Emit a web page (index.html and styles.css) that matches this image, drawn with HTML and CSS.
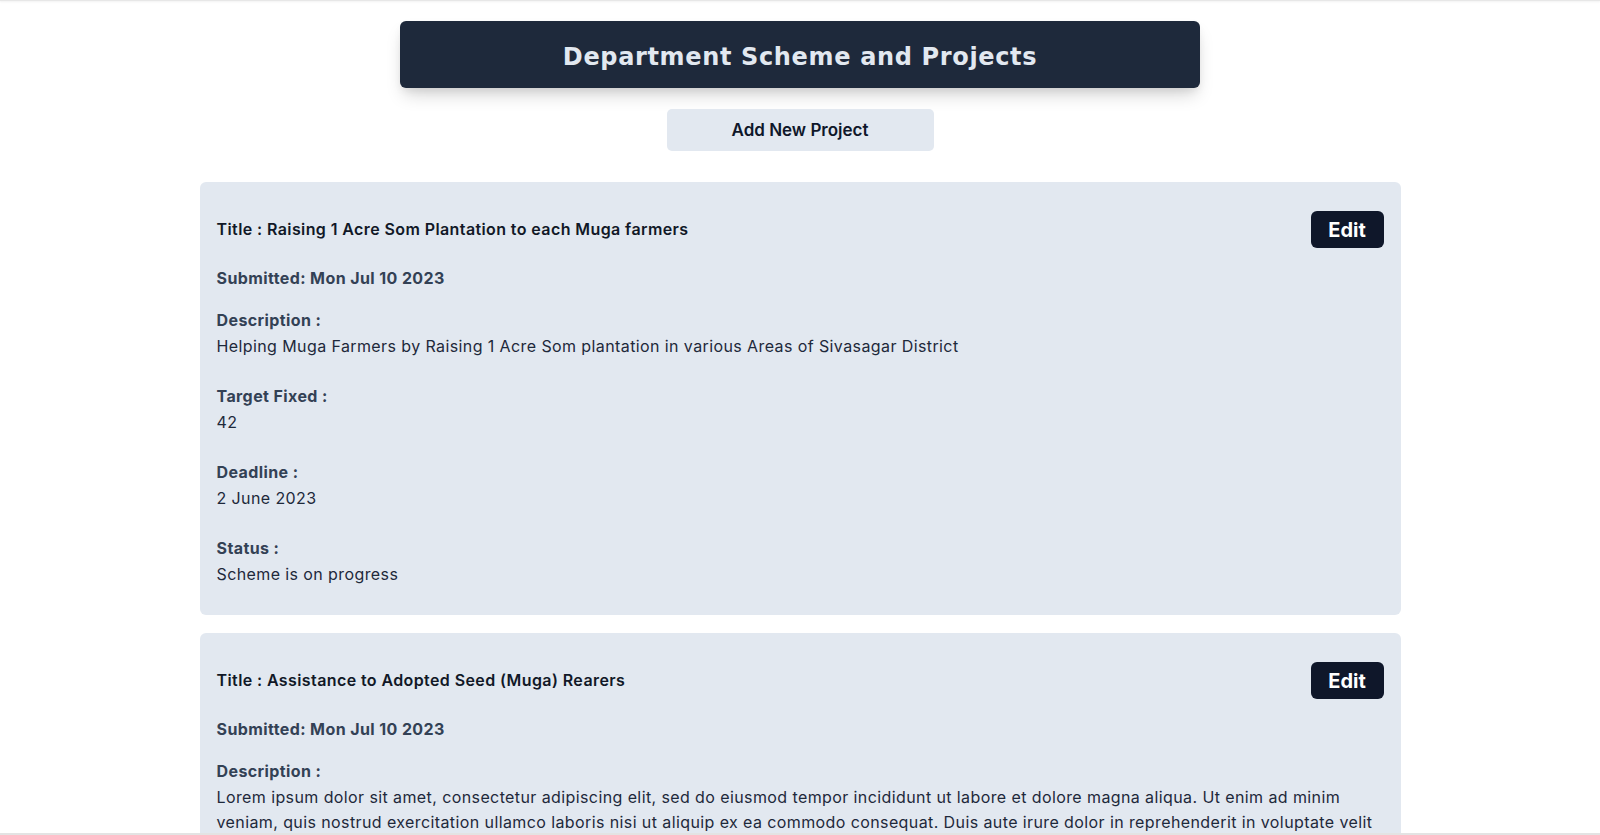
FILE: index.html
```html
<!DOCTYPE html>
<html lang="en">
<head>
<meta charset="utf-8">
<title>Department Scheme and Projects</title>
<link rel="stylesheet" href="styles.css">
</head>
<body>
<div class="topline"></div>
<main class="page">
  <header class="banner">
    <h1 class="banner-title">Department Scheme and Projects</h1>
  </header>
  <button class="add-btn" type="button">Add New Project</button>

  <section class="list">
    <article class="card">
      <div class="card-head">
        <h2 class="card-title">Title : Raising 1 Acre Som Plantation to each Muga farmers</h2>
        <button class="edit-btn" type="button">Edit</button>
      </div>
      <p class="submitted">Submitted: Mon Jul 10 2023</p>
      <div class="field">
        <div class="label">Description :</div>
        <div class="value">Helping Muga Farmers by Raising 1 Acre Som plantation in various Areas of Sivasagar District</div>
      </div>
      <div class="field">
        <div class="label">Target Fixed :</div>
        <div class="value">42</div>
      </div>
      <div class="field">
        <div class="label">Deadline :</div>
        <div class="value">2 June 2023</div>
      </div>
      <div class="field">
        <div class="label">Status :</div>
        <div class="value">Scheme is on progress</div>
      </div>
    </article>

    <article class="card">
      <div class="card-head">
        <h2 class="card-title">Title : Assistance to Adopted Seed (Muga) Rearers</h2>
        <button class="edit-btn" type="button">Edit</button>
      </div>
      <p class="submitted">Submitted: Mon Jul 10 2023</p>
      <div class="field">
        <div class="label">Description :</div>
        <div class="value">Lorem ipsum dolor sit amet, consectetur adipiscing elit, sed do eiusmod tempor incididunt ut labore et dolore magna aliqua. Ut enim ad minim veniam, quis nostrud exercitation ullamco laboris nisi ut aliquip ex ea commodo consequat. Duis aute irure dolor in reprehenderit in voluptate velit esse cillum dolore eu fugiat nulla pariatur. Excepteur sint occaecat cupidatat non proident, sunt in culpa qui officia deserunt mollit anim id est laborum.</div>
      </div>
      <div class="field">
        <div class="label">Target Fixed :</div>
        <div class="value">30</div>
      </div>
      <div class="field">
        <div class="label">Deadline :</div>
        <div class="value">2 June 2023</div>
      </div>
      <div class="field">
        <div class="label">Status :</div>
        <div class="value">Scheme is on progress</div>
      </div>
    </article>
  </section>
</main>
<div class="bottomline"></div>
</body>
</html>
```

FILE: styles.css
```css
html, body {
  margin: 0;
  padding: 0;
  background: #ffffff;
  overflow: hidden;
}

body {
  font-family: Inter, "Noto Sans", "Liberation Sans", sans-serif;
  color: #1e293b;
}

.topline {
  position: fixed;
  top: 0;
  left: 0;
  right: 0;
  height: 1px;
  background: #e7e7e7;
  box-shadow: 0 1px 2px rgba(0, 0, 0, 0.08);
}

.bottomline {
  position: fixed;
  left: 0;
  right: 0;
  bottom: 0;
  height: 2px;
  background: #e3e3e3;
}

.page {
  display: flex;
  flex-direction: column;
  align-items: center;
  padding-top: 21px;
}

.banner {
  width: 800px;
  height: 67px;
  box-sizing: border-box;
  background: #1e293b;
  border-radius: 6px;
  display: flex;
  align-items: center;
  justify-content: center;
  box-shadow: 0 10px 18px -4px rgba(0, 0, 0, 0.18), 0 4px 8px -2px rgba(0, 0, 0, 0.08);
}

.banner-title {
  margin: 0;
  font-family: "DejaVu Sans", Verdana, sans-serif;
  font-weight: 700;
  font-size: 24px;
  letter-spacing: 0.65px;
  line-height: 29px;
  color: #e2e8f0;
  padding-top: 5px;
}

.add-btn {
  margin-top: 21px;
  width: 267px;
  height: 42px;
  border: none;
  border-radius: 5px;
  background: #e2e8f0;
  font-family: Inter, "Noto Sans", sans-serif;
  font-weight: 600;
  font-size: 17px;
  color: #0f172a;
  padding: 0;
}

.list {
  margin-top: 31px;
  width: 1201px;
  display: flex;
  flex-direction: column;
  gap: 18px;
}

.card {
  background: #e2e8f0;
  border-radius: 6px;
  padding: 29px 17px 28px 17px;
  letter-spacing: 0.4px;
}

.card-head {
  display: flex;
  align-items: center;
  justify-content: space-between;
  height: 37px;
}

.card-title {
  margin: 0;
  font-size: 16px;
  font-weight: 600;
  line-height: 25px;
  color: #111827;
}

.edit-btn {
  width: 73px;
  height: 37px;
  border: none;
  border-radius: 6px;
  background: #0f172a;
  color: #ffffff;
  font-family: Inter, "Noto Sans", sans-serif;
  font-weight: 700;
  font-size: 20px;
  letter-spacing: 0;
  padding: 0;
}

.submitted {
  margin: 18px 0 17px 0;
  font-size: 16px;
  font-weight: 700;
  line-height: 25px;
  color: #334155;
}

.field + .field {
  margin-top: 25px;
}

.label {
  font-size: 16px;
  font-weight: 700;
  line-height: 25.5px;
  color: #334155;
}

.value {
  font-size: 16px;
  font-weight: 400;
  line-height: 25.5px;
  color: #1e293b;
}
```
